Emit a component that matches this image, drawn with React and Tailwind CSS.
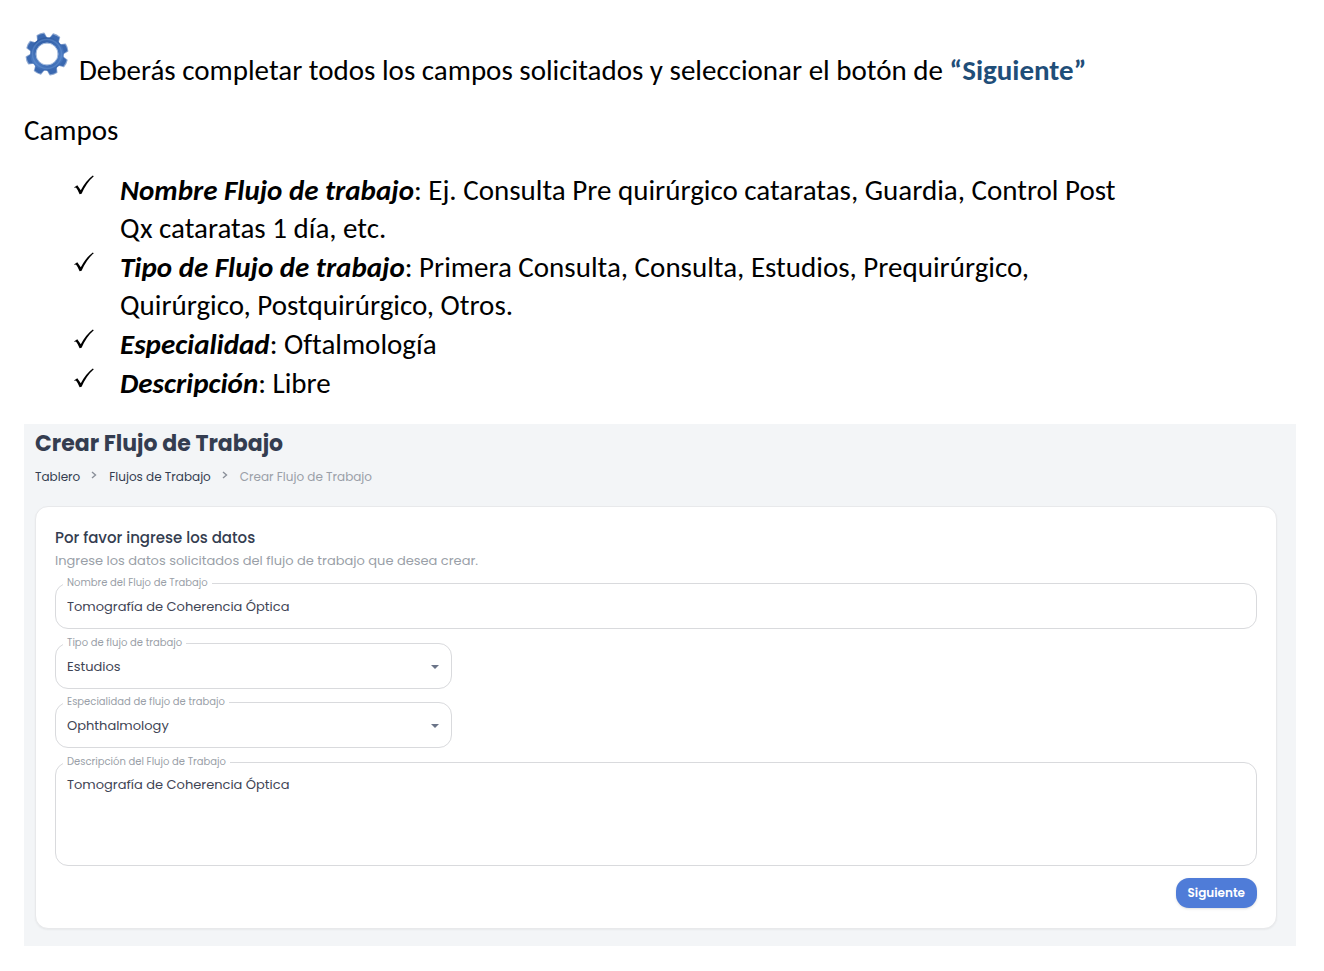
import { useState } from "react";

const campos = [
  { nombre: "Nombre Flujo de trabajo", texto: "Ej. Consulta Pre quirúrgico cataratas, Guardia, Control Post Qx cataratas 1 día, etc." },
  { nombre: "Tipo de Flujo de trabajo", texto: "Primera Consulta, Consulta, Estudios, Prequirúrgico, Quirúrgico, Postquirúrgico, Otros." },
  { nombre: "Especialidad", texto: "Oftalmología" },
  { nombre: "Descripción", texto: "Libre" },
];

const dientes = [27, 72, 117, 162, 207, 252, 297, 342];

const GearIcon = () => (
  <svg viewBox="0 0 44 44" className="size-11 shrink-0" aria-hidden="true">
    <defs>
      <linearGradient id="gear" gradientUnits="userSpaceOnUse" x1="14" y1="0" x2="26" y2="44">
        <stop offset="0" stopColor="#264f94" />
        <stop offset="0.3" stopColor="#3a68b0" />
        <stop offset="0.65" stopColor="#4d7cc2" />
        <stop offset="1" stopColor="#2f5da6" />
      </linearGradient>
      <mask id="agujero">
        <rect width="44" height="44" fill="white" />
        <circle cx="22" cy="22" r="10.800" fill="black" />
      </mask>
    </defs>
    <g mask="url(#agujero)">
      <g fill="#fff" stroke="#8fa9d2" strokeWidth="1.600" strokeLinejoin="round">
        {dientes.map((a) => (
          <path key={a} d="M17.500 6.500 L18.500 1.500 Q22 0.500 25.500 1.500 L26.500 6.500 Z" transform={`rotate(${a} 22 22)`} />
        ))}
      </g>
      <g fill="#3a68b0">
        {dientes.map((a) => (
          <path key={a} d="M17 7.500 L18.500 1.800 Q22 0.800 25.500 1.800 L27 7.500 Z" transform={`rotate(${a} 22 22)`} />
        ))}
      </g>
      <circle cx="22" cy="22" r="16.800" fill="url(#gear)" />
      <circle cx="22" cy="22" r="14.500" fill="none" stroke="#6f9ad8" strokeWidth="1.500" opacity="0.4" />
    </g>
    <circle cx="22" cy="22" r="11" fill="none" stroke="#a9bfe0" strokeWidth="1" />
  </svg>
);

const CheckIcon = () => (
  <svg viewBox="0 0 20 20" className="mt-1 size-5 shrink-0" aria-hidden="true">
    <path d="M0.300 12.200 L3.300 10.300 L6.800 15.200 Q12 5.500 18.800 0.500 L19.800 1.200 Q12.500 7.500 7.600 18.800 L5.600 19.200 Q3.800 14.500 2.300 12.900 Q1.600 12.300 0.700 12.900 Z" />
  </svg>
);

const Chevron = () => (
  <svg viewBox="0 0 6 8" className="mb-1 h-2 w-1.5" fill="none" stroke="#8a8f99" strokeWidth="1.400" aria-hidden="true">
    <path d="M1 1 L4.500 4 L1 7" />
  </svg>
);

const Campo = ({ id, label, children }) => (
  <div className="relative">
    <label htmlFor={id} className="absolute -top-2 left-2 bg-white px-1 text-[10px] leading-4 text-[#9a9fa8]">
      {label}
    </label>
    {children}
  </div>
);

const control = "block w-full rounded-[13px] border border-[#d9dadd] bg-transparent px-[11px] text-[13px] text-[#3f4555] outline-none focus:border-[#4f7cd8]";

const Selector = ({ id, label, value, onChange, options }) => (
  <Campo id={id} label={label}>
    <select id={id} value={value} onChange={onChange} className={`${control} h-[46px] appearance-none pt-0.5`}>
      {options.map((o) => (
        <option key={o}>{o}</option>
      ))}
    </select>
    <svg viewBox="0 0 8 4" className="pointer-events-none absolute top-[22px] right-[13px] h-1 w-2 fill-[#6b7488]" aria-hidden="true">
      <path d="M0 0 H8 L4 4 Z" />
    </svg>
  </Campo>
);

const App = () => {
  const [form, setForm] = useState({
    nombre: "Tomografía de Coherencia Óptica",
    tipo: "Estudios",
    especialidad: "Ophthalmology",
    descripcion: "Tomografía de Coherencia Óptica",
  });

  const cambiar = (campo) => (e) => setForm({ ...form, [campo]: e.target.value });

  return (
    <main className="min-h-screen bg-white pt-8 pr-7 pb-6 pl-6 text-black">
      <div className="font-[Carlito,Lato,sans-serif] text-[29px] leading-[38px] [font-variant-ligatures:none]">
        <div className="flex items-start gap-2.5 pl-px">
          <GearIcon />
          <p className="pt-[19px]">
            Deberás completar todos los campos solicitados y seleccionar el botón de{" "}
            <strong className="text-[#1f4e79]">“Siguiente”</strong>
          </p>
        </div>
        <p className="mt-[22px]">Campos</p>
        <ul className="mt-[22px] flex max-w-[1120px] flex-col gap-px pl-[50px]">
          {campos.map((c) => (
            <li key={c.nombre} className="flex gap-[26px]">
              <CheckIcon />
              <p>
                <strong className="italic">{c.nombre}</strong>: {c.texto}
              </p>
            </li>
          ))}
        </ul>
      </div>

      <section className="mt-[22px] bg-[#f3f5f7] pt-1 pr-[19px] pb-[17px] pl-[11px] font-[Poppins,Inter,sans-serif]">
        <h1 className="text-[22px] leading-8 font-bold text-[#343d50]">Crear Flujo de Trabajo</h1>
        <nav className="mt-[7px] flex items-center text-[12px] leading-5 text-[#343d50]">
          <a href="#tablero">Tablero</a>
          <span className="pr-3 pl-[11px]"><Chevron /></span>
          <a href="#flujos">Flujos de Trabajo</a>
          <span className="pr-3 pl-[11px]"><Chevron /></span>
          <span className="text-[#9a9fa8]">Crear Flujo de Trabajo</span>
        </nav>

        <form
          onSubmit={(e) => e.preventDefault()}
          className="mt-[19px] rounded-[13px] border border-[#e8e9eb] bg-white px-[19px] py-5 shadow-xs"
        >
          <h2 className="text-[15px] leading-[22px] font-medium text-[#343d50]">Por favor ingrese los datos</h2>
          <p className="text-[13px] leading-6 text-[#9a9fa8]">
            Ingrese los datos solicitados del flujo de trabajo que desea crear.
          </p>
          <div className="mt-2.5 flex flex-col gap-3.5">
            <Campo id="nombre" label="Nombre del Flujo de Trabajo">
              <input id="nombre" type="text" value={form.nombre} onChange={cambiar("nombre")} className={`${control} h-[46px] pt-0.5`} />
            </Campo>
            <div className="flex w-[33%] flex-col gap-[13px]">
              <Selector id="tipo" label="Tipo de flujo de trabajo" value={form.tipo} onChange={cambiar("tipo")} options={["Estudios", "Consulta", "Otros"]} />
              <Selector id="especialidad" label="Especialidad de flujo de trabajo" value={form.especialidad} onChange={cambiar("especialidad")} options={["Ophthalmology"]} />
            </div>
            <Campo id="descripcion" label="Descripción del Flujo de Trabajo">
              <textarea id="descripcion" value={form.descripcion} onChange={cambiar("descripcion")} className={`${control} h-[104px] resize-none py-3 leading-5`} />
            </Campo>
          </div>
          <div className="mt-3 flex justify-end">
            <button type="submit" className="rounded-[13px] bg-[#4f7cd8] px-3 py-[5px] text-[12px] leading-5 font-semibold text-white shadow">
              Siguiente
            </button>
          </div>
        </form>
      </section>
    </main>
  );
};

export default App;
